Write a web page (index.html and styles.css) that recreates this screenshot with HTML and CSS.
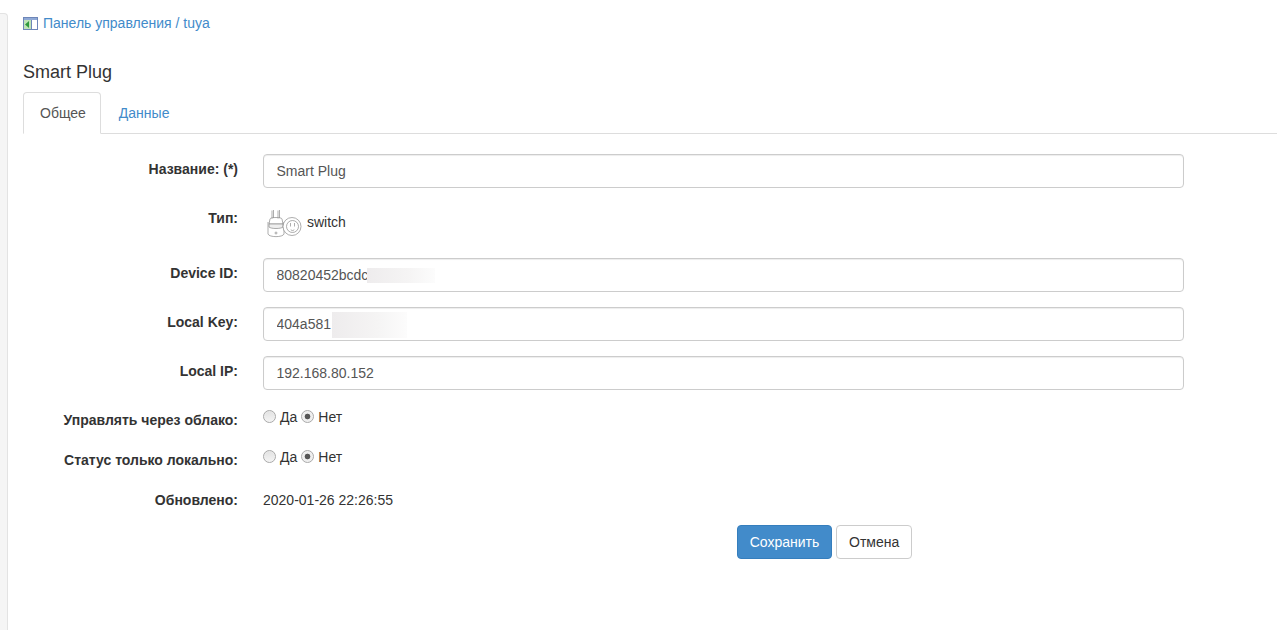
FILE: index.html
```html
<!DOCTYPE html>
<html lang="ru">
<head>
<meta charset="utf-8">
<title>Smart Plug</title>
<link rel="stylesheet" href="styles.css">
</head>
<body>
<div class="page">
  <div class="strip"></div>
  <main class="main">
    <nav class="crumbs">
      <svg class="crumb-icon" width="15" height="13" viewBox="0 0 15 13">
        <rect x="0.5" y="0.5" width="14" height="12" fill="#fff" stroke="#6d86b8"/>
        <rect x="1" y="1" width="13" height="2" fill="#8fa9d6"/>
        <rect x="1" y="3" width="7" height="9" fill="#bfe3b6"/>
        <path d="M2 7.5l4-3.5v7z" fill="#2f9a3c"/>
        <rect x="8" y="3" width="1" height="9" fill="#6d86b8"/>
      </svg>
      <a href="#">Панель управления</a> / <a href="#">tuya</a>
    </nav>
    <h1 class="title">Smart Plug</h1>
    <ul class="tabs">
      <li class="tab active">Общее</li>
      <li class="tab"><a href="#">Данные</a></li>
    </ul>
    <form class="form">
      <div class="row">
        <label class="label">Название: (*)</label>
        <input class="input" value="Smart Plug">
      </div>
      <div class="row row-type">
        <label class="label">Тип:</label>
        <div class="type-value">
          <svg class="plug" width="36" height="30" viewBox="0 0 36 30" fill="none" stroke="#8a8a8a" stroke-width="0.7">
            <path d="M6 2.5v8M7.500 2v8M12 2.500v8M13.500 2v8"/>
            <path d="M4 11c0-2 12-2 12 0l1 5H3z"/>
            <path d="M3 16h14v3c-2 2-12 2-14 0z" fill="#eee"/>
            <path d="M2 14v12c1 3.500 15 3.500 16 0v-12"/>
            <circle cx="10" cy="25" r="1"/>
            <circle cx="26" cy="18.500" r="9" fill="#fff"/>
            <circle cx="26.500" cy="18.500" r="6"/>
            <path d="M24.500 15v3.500M28.500 15v3.500M25 21.500c0 1.500 3 1.500 3 0"/>
          </svg>
          <span>switch</span>
        </div>
      </div>
      <div class="row">
        <label class="label">Device ID:</label>
        <div class="masked">
          <input class="input" value="80820452bcdc">
          <span class="blur blur-id"></span>
        </div>
      </div>
      <div class="row">
        <label class="label">Local Key:</label>
        <div class="masked">
          <input class="input" value="404a581">
          <span class="blur blur-key"></span>
        </div>
      </div>
      <div class="row">
        <label class="label">Local IP:</label>
        <input class="input" value="192.168.80.152">
      </div>
      <div class="row row-radio">
        <label class="label">Управлять через облако:</label>
        <div class="radios">
          <span class="radio"></span><span class="radio-text">Да</span>
          <span class="radio checked"></span><span class="radio-text">Нет</span>
        </div>
      </div>
      <div class="row row-radio">
        <label class="label">Статус только локально:</label>
        <div class="radios">
          <span class="radio"></span><span class="radio-text">Да</span>
          <span class="radio checked"></span><span class="radio-text">Нет</span>
        </div>
      </div>
      <div class="row row-static">
        <label class="label">Обновлено:</label>
        <div class="static">2020-01-26 22:26:55</div>
      </div>
      <div class="actions">
        <button type="button" class="btn btn-primary">Сохранить</button>
        <button type="button" class="btn">Отмена</button>
      </div>
    </form>
  </main>
</div>
</body>
</html>
```
FILE: styles.css
```css
* { box-sizing: border-box; }
html, body { margin: 0; height: 100%; }
body {
  font-family: "Liberation Sans", Arial, sans-serif;
  font-size: 14px;
  line-height: 20px;
  color: #333;
  background: #fff;
  overflow: hidden;
}
a { color: #428bca; text-decoration: none; }
.page { display: flex; height: 630px; }
.strip {
  flex: 0 0 8px;
  margin-top: 13px;
  background: #f5f5f5;
  border: 1px solid #e3e3e3;
  border-left: 0;
  border-bottom: 0;
  border-top-right-radius: 4px;
}
.main { flex: 1; padding-left: 15px; min-width: 0; }
.crumbs {
  display: flex;
  align-items: center;
  height: 20px;
  margin-top: 13px;
  color: #428bca;
  white-space: pre;
}
.crumb-icon { margin-right: 5px; flex: none; margin-top: 1px; }
.title {
  margin: 19px 0 0;
  height: 40px;
  font-size: 18px;
  font-weight: 400;
  line-height: 40px;
}
.tabs {
  display: flex;
  list-style: none;
  margin: 0;
  padding: 0;
  height: 42px;
  border-bottom: 1px solid #ddd;
}
.tab {
  height: 42px;
  padding: 10px 15px;
  border: 1px solid transparent;
  border-radius: 4px 4px 0 0;
  margin-right: 2px;
}
.tab.active {
  padding: 10px 14px 10px 16px;
  color: #555;
  background: #fff;
  border-color: #ddd #ddd #fff;
}
.form { padding-top: 20px; }
.row { display: flex; margin-bottom: 15px; width: 1161px; gap: 25px; }
.label {
  flex: 0 0 215px;
  padding-top: 5px;
  text-align: right;
  font-weight: 700;
  line-height: 20px;
}
.input {
  display: block;
  width: 921px;
  height: 34px;
  padding: 6px 12.5px;
  font: 14px/20px "Liberation Sans", Arial, sans-serif;
  color: #555;
  background: #fff;
  border: 1px solid #ccc;
  border-radius: 4px;
  box-shadow: inset 0 1px 1px rgba(0, 0, 0, .075);
}
.masked { position: relative; width: 921px; }
.blur {
  position: absolute;
  background: linear-gradient(90deg, #eeeced, #f5f4f4 60%, #fcfcfc);
}
.blur-id { left: 104px; width: 68px; top: 10px; height: 15px; }
.blur-key { left: 69px; width: 75px; top: 5px; height: 26px; }
.row-type { height: 40px; }
.type-value { display: flex; align-items: flex-start; height: 40px; }
.plug { margin: 5px 5px 0 3px; flex: none; }
.type-value span { padding-top: 9px; }
.row-radio { height: 40px; margin-bottom: 0; }
.radios { display: flex; align-items: center; height: 20px; margin-top: 2px; }
.radio {
  width: 13px;
  height: 13px;
  margin-top: -2px;
  border-radius: 50%;
  border: 1px solid #a9a9a9;
  background: linear-gradient(#e2e2e2, #f4f4f4);
  box-shadow: inset 0 0 1px #fff;
  flex: none;
}
.radio.checked { background: radial-gradient(circle, #555 0 2.5px, #eee 3.2px); }
.radio-text { margin: 0 4px; }
.static { padding-top: 5px; }
.actions { display: flex; gap: 4px; padding-left: 714px; }
.btn {
  height: 34px;
  padding: 6px 12px;
  font: 14px/20px "Liberation Sans", Arial, sans-serif;
  color: #333;
  background: #fff;
  border: 1px solid #ccc;
  border-radius: 4px;
}
.btn-primary { width: 95px; padding: 6px 0; color: #fff; background: #428bca; border-color: #357ebd; }
```
